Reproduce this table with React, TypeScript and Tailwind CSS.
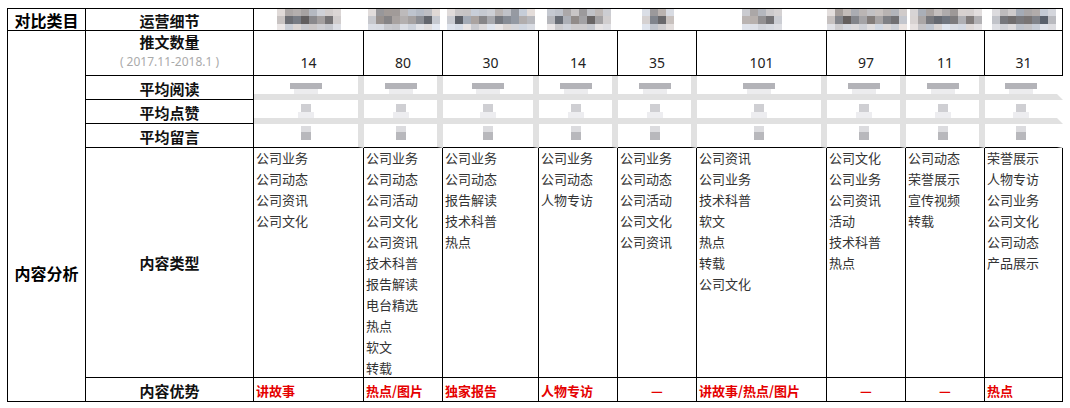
import React from 'react';

const accounts = [
  { blob: 60, count: '14', types: ['公司业务', '公司动态', '公司资讯', '公司文化'], adv: '讲故事' },
  { blob: 74, count: '80', types: ['公司业务', '公司动态', '公司活动', '公司文化', '公司资讯', '技术科普', '报告解读', '电台精选', '热点', '软文', '转载'], adv: '热点/图片' },
  { blob: 88, count: '30', types: ['公司业务', '公司动态', '报告解读', '技术科普', '热点'], adv: '独家报告' },
  { blob: 64, count: '14', types: ['公司业务', '公司动态', '人物专访'], adv: '人物专访' },
  { blob: 32, count: '35', types: ['公司业务', '公司动态', '公司活动', '公司文化', '公司资讯'], adv: '—' },
  { blob: 40, count: '101', types: ['公司资讯', '公司业务', '技术科普', '软文', '热点', '转载', '公司文化'], adv: '讲故事/热点/图片' },
  { blob: 76, count: '97', types: ['公司文化', '公司业务', '公司资讯', '活动', '技术科普', '热点'], adv: '—' },
  { blob: 70, count: '11', types: ['公司动态', '荣誉展示', '宣传视频', '转载'], adv: '—' },
  { blob: 64, count: '31', types: ['荣誉展示', '人物专访', '公司业务', '公司文化', '公司动态', '产品展示'], adv: '热点' },
];

// pseudo-random grey for the pixelated account names
const grey = (seed: number, row: number, edge: boolean) => {
  const r = Math.abs(Math.sin(seed * 12.9898) * 43758.5453) % 1;
  const t = Math.abs(Math.sin(seed * 78.233) * 12345.678) % 1;
  const ranges = [
    [150, 60],
    [88, 90],
    [195, 35],
  ];
  let v = ranges[row][0] + r * ranges[row][1];
  if (edge) v = v + (235 - v) * 0.6;
  const tint = Math.round((t - 0.5) * 14);
  const g = Math.round(v);
  return `rgb(${g + tint},${g},${g - tint + 4})`;
};

const Mosaic: React.FC<{ width: number; seed: number }> = ({ width, seed }) => {
  const n = Math.max(2, Math.round(width / 8));
  const heights = ['h-[7px]', 'h-[8px]', 'h-[6px]'];
  return (
    <div className="flex flex-col">
      {heights.map((h, ri) => (
        <div key={ri} className={`flex ${h}`}>
          {Array.from({ length: n }).map((_, i) => (
            <div
              key={i}
              className="w-[8px] h-full"
              style={{ backgroundColor: grey(seed * 31 + ri * 7 + i, ri, i === 0 || i === n - 1) }}
            />
          ))}
        </div>
      ))}
    </div>
  );
};

const cjk = "font-['Microsoft_YaHei','Noto_Sans_CJK_SC',sans-serif]";

const App: React.FC = () => {
  return (
    <div className={`w-[1070px] h-[408px] bg-white pt-[8px] pl-[7px] ${cjk}`}>
      <div className="grid w-max grid-cols-[78px_168px_110px_79px_96px_79px_79px_130px_79px_79px_78px] grid-rows-[22px_45px_24px_24px_24px_230px_24px] border-t border-l border-black">
        {/* header row */}
        <div className="border-r border-b border-black flex items-center justify-center pt-px text-[16px] font-bold text-black leading-none">对比类目</div>
        <div className="border-r border-b border-black flex items-center justify-center pt-px text-[15px] font-bold text-[#111] leading-none">运营细节</div>
        {accounts.map((a, i) => (
          <div key={i} className={`border-b border-black flex items-center justify-center ${i === accounts.length - 1 ? 'border-r' : ''}`}>
            <Mosaic width={a.blob} seed={i + 1} />
          </div>
        ))}

        {/* left merged label */}
        <div className="row-span-6 border-r border-b border-black flex flex-col justify-center pt-[114px] text-center text-[16px] font-bold text-black">内容分析</div>

        {/* 推文数量 */}
        <div className="border-r border-b border-black flex flex-col items-center pt-px leading-[20px]">
          <span className="text-[15px] font-bold text-[#111]">推文数量</span>
          <span className="text-[12px] text-[#aaa] font-['Noto_Sans',sans-serif]">( 2017.11-2018.1 )</span>
        </div>
        {accounts.map((a, i) => (
          <div key={i} className="border-r border-b border-black flex justify-center pt-[22px] text-[14px] leading-[20px] text-[#222] font-['Noto_Sans',sans-serif]">
            {a.count}
          </div>
        ))}

        {/* blurred metric rows */}
        {['平均阅读', '平均点赞', '平均留言'].map((label, ri) => (
          <React.Fragment key={label}>
            <div className="border-r border-b border-black flex items-center justify-center pt-px text-[15px] font-bold text-[#111] leading-none">{label}</div>
            {accounts.map((_, i) => (
              <div
                key={i}
                className={`flex flex-col items-center border-r-[6px] ${ri < 2 ? 'border-b-[6px]' : 'border-b border-b-black'} ${i === accounts.length - 1 ? 'border-r-white' : 'border-r-[#e1e1e1]'} border-b-[#e1e1e1] blur-[0.5px]`}
              >
                {ri === 0 && (
                  <>
                    <div className="mt-[7px] w-[32px] h-[6px] bg-[#b3b3b8]" />
                    <div className="w-[24px] h-[6px] bg-[#ececee]" />
                  </>
                )}
                {ri === 1 && (
                  <>
                    <div className="mt-[4px] w-[10px] h-[8px] bg-[#cfcfd3]" />
                    <div className="w-[16px] h-[6px] bg-[#ededf0]" />
                  </>
                )}
                {ri === 2 && (
                  <>
                    <div className="mt-[2px] w-[10px] h-[6px] bg-[#dcdcdf]" />
                    <div className="w-[10px] h-[8px] bg-[#b8b8bc]" />
                  </>
                )}
              </div>
            ))}
          </React.Fragment>
        ))}

        {/* 内容类型 */}
        <div className="border-r border-b border-black flex items-center justify-center text-[15px] font-bold text-[#111] leading-none">内容类型</div>
        {accounts.map((a, i) => (
          <div key={i} className="border-r border-b border-black pl-[2px] -mt-px overflow-hidden text-[13px] leading-[21px] text-[#333]">
            {a.types.map((t, ti) => (
              <div key={ti}>{t}</div>
            ))}
          </div>
        ))}

        {/* 内容优势 */}
        <div className="border-r border-b border-black flex items-center justify-center pt-px text-[15px] font-bold text-[#111] leading-none">内容优势</div>
        {accounts.map((a, i) => (
          <div
            key={i}
            className={`border-r border-b border-black flex items-center pt-px text-[13px] font-bold text-[#e50000] leading-none ${a.adv === '—' ? 'justify-center' : 'pl-[2px]'}`}
          >
            {a.adv}
          </div>
        ))}
      </div>
    </div>
  );
};

export default App;
